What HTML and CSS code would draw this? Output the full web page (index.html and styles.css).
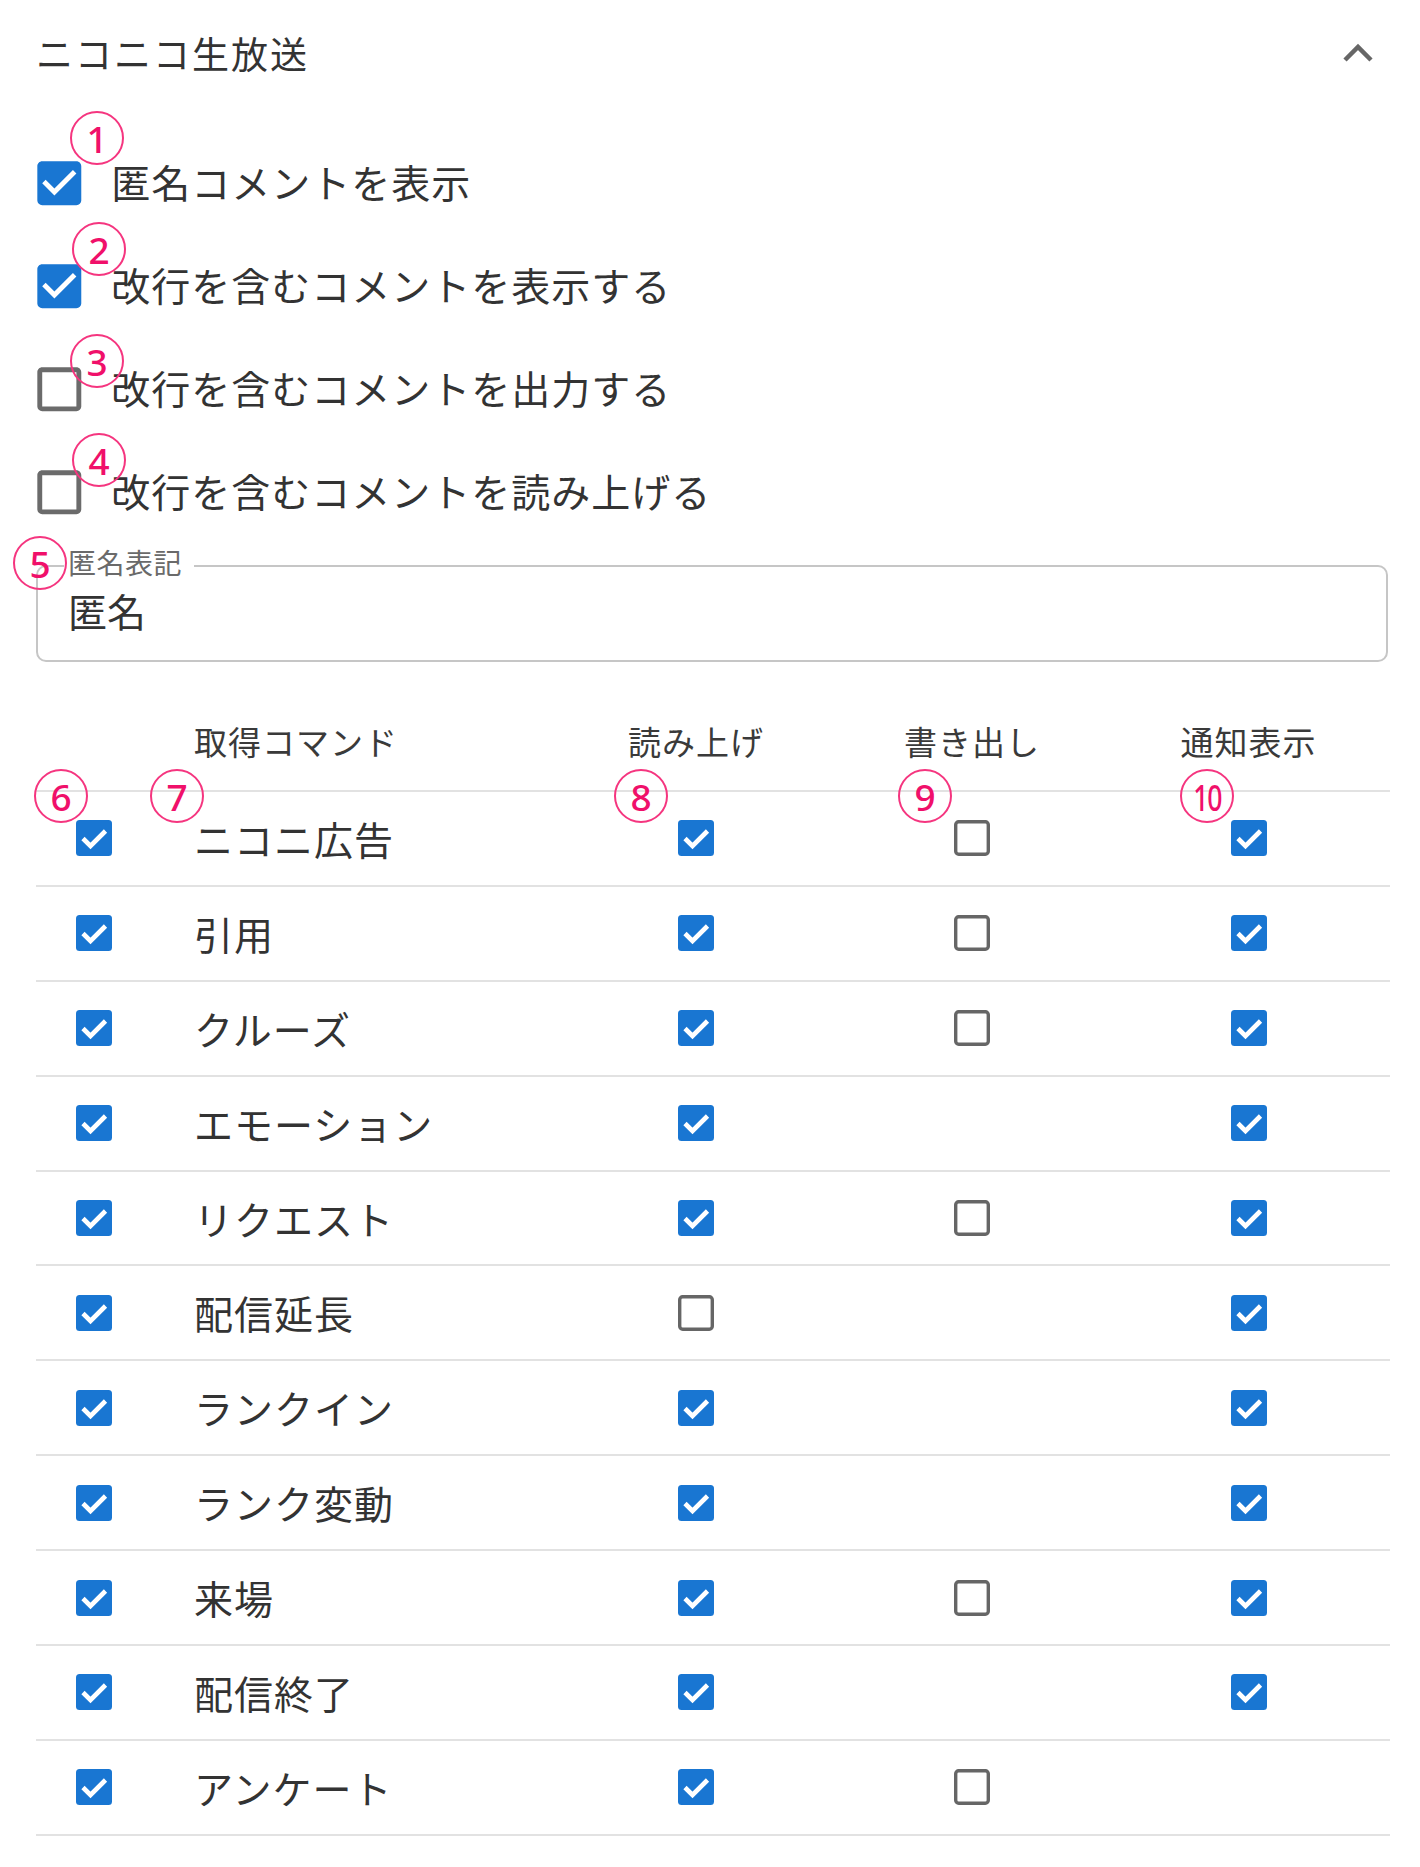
FILE: index.html
```html
<!DOCTYPE html>
<html lang="ja">
<head>
<meta charset="utf-8">
<title>ニコニコ生放送</title>
<link rel="stylesheet" href="styles.css">
</head>
<body>
<div class="panel">
  <div class="panel-header">
    <span class="panel-title">ニコニコ生放送</span>
    <svg class="chevron" viewBox="0 0 30 20" width="30" height="20"><polyline points="2,17 15,4 28,17" fill="none" stroke="#666" stroke-width="4.5"/></svg>
  </div>

  <div class="options">
    <div class="opt-row">
      <svg class="mcb on" viewBox="0 0 24 24"><path d="M10,17L5,12L6.41,10.58L10,14.17L17.59,6.58L19,8M19,3H5C3.89,3 3,3.89 3,5V19A2,2 0 0,0 5,21H19A2,2 0 0,0 21,19V5C21,3.89 20.1,3 19,3Z"/></svg>
      <span class="opt-label">匿名コメントを表示</span>
    </div>
    <div class="opt-row">
      <svg class="mcb on" viewBox="0 0 24 24"><path d="M10,17L5,12L6.41,10.58L10,14.17L17.59,6.58L19,8M19,3H5C3.89,3 3,3.89 3,5V19A2,2 0 0,0 5,21H19A2,2 0 0,0 21,19V5C21,3.89 20.1,3 19,3Z"/></svg>
      <span class="opt-label">改行を含むコメントを表示する</span>
    </div>
    <div class="opt-row">
      <svg class="mcb off" viewBox="0 0 24 24"><path d="M19,3H5C3.89,3 3,3.89 3,5V19A2,2 0 0,0 5,21H19A2,2 0 0,0 21,19V5C21,3.89 20.1,3 19,3M19,5V19H5V5H19Z"/></svg>
      <span class="opt-label">改行を含むコメントを出力する</span>
    </div>
    <div class="opt-row">
      <svg class="mcb off" viewBox="0 0 24 24"><path d="M19,3H5C3.89,3 3,3.89 3,5V19A2,2 0 0,0 5,21H19A2,2 0 0,0 21,19V5C21,3.89 20.1,3 19,3M19,5V19H5V5H19Z"/></svg>
      <span class="opt-label">改行を含むコメントを読み上げる</span>
    </div>
  </div>

  <fieldset class="field">
    <legend class="field-label">匿名表記</legend>
    <div class="field-value">匿名</div>
  </fieldset>

  <div class="table">
    <div class="trow thead">
      <div class="cell c1"></div>
      <div class="cell c2">取得コマンド</div>
      <div class="cell cc">読み上げ</div>
      <div class="cell cc">書き出し</div>
      <div class="cell cc">通知表示</div>
    </div>
    <div id="rows"></div>
  </div>

  <div class="mark" style="left:70px;top:111px">1</div>
  <div class="mark" style="left:72px;top:222px">2</div>
  <div class="mark" style="left:70px;top:334px">3</div>
  <div class="mark" style="left:72px;top:433px">4</div>
  <div class="mark" style="left:13px;top:536px">5</div>
  <div class="mark" style="left:34px;top:769px">6</div>
  <div class="mark" style="left:150px;top:769px">7</div>
  <div class="mark" style="left:614px;top:769px">8</div>
  <div class="mark" style="left:898px;top:769px">9</div>
  <div class="mark ten" style="left:1180px;top:769px"><span>10</span></div>
</div>
<script src="app.js"></script>
</body>
</html>
```

FILE: app.js
```js
var data = [
  ["ニコニ広告", 1, 0, 1],
  ["引用", 1, 0, 1],
  ["クルーズ", 1, 0, 1],
  ["エモーション", 1, -1, 1],
  ["リクエスト", 1, 0, 1],
  ["配信延長", 0, -1, 1],
  ["ランクイン", 1, -1, 1],
  ["ランク変動", 1, -1, 1],
  ["来場", 1, 0, 1],
  ["配信終了", 1, -1, 1],
  ["アンケート", 1, 0, -1]
];
function box(v) {
  if (v === 1) {
    return '<svg class="tcb" viewBox="0 0 36 36"><rect x="0" y="0" width="36" height="36" rx="3.5" fill="#1976d2"/><path d="M7 18.5 L14.5 26 L29.5 11" fill="none" stroke="#fff" stroke-width="4.6"/></svg>';
  }
  if (v === 0) {
    return '<svg class="tcb" viewBox="0 0 36 36"><rect x="1.7" y="1.7" width="32.6" height="32.6" rx="3" fill="#fff" stroke="#666" stroke-width="3.4"/></svg>';
  }
  return '';
}
var html = '';
data.forEach(function (r) {
  html += '<div class="trow">' +
    '<div class="cell c1 cc">' + box(1) + '</div>' +
    '<div class="cell c2 name">' + r[0] + '</div>' +
    '<div class="cell cc">' + box(r[1]) + '</div>' +
    '<div class="cell cc">' + box(r[2]) + '</div>' +
    '<div class="cell cc">' + box(r[3]) + '</div>' +
    '</div>';
});
document.getElementById('rows').innerHTML = html;
```

FILE: styles.css
```css
html, body {
  margin: 0;
  padding: 0;
  background: #fff;
}
body {
  font-family: "Noto Sans CJK JP", "Noto Sans", sans-serif;
  color: #333;
}
.panel {
  position: relative;
  margin-left: 36px;
  width: 1354px;
}
.panel-header {
  height: 106px;
  display: flex;
  align-items: center;
  justify-content: space-between;
}
.panel-title {
  font-size: 37px;
  line-height: 1;
  letter-spacing: 2px;
  color: #333;
}
.chevron {
  margin-right: 17px;
  display: block;
}
.options {
  padding-top: 26px;
}
.opt-row {
  height: 103px;
  display: flex;
  align-items: center;
}
.mcb {
  width: 58.6px;
  height: 58.6px;
  margin-left: -6.3px;
  flex: none;
  display: block;
}
.mcb.on { fill: #1976d2; }
.mcb.off { fill: #6b6b6b; }
.opt-label {
  margin-left: 23px;
  padding-bottom: 4px;
  font-size: 39px;
  line-height: 1;
  letter-spacing: 1px;
  color: #333;
}
.field {
  margin: 4px 0 0 0;
  width: 1352px;
  box-sizing: border-box;
  border: 2px solid #c6c6c6;
  border-radius: 10px;
  padding: 0 0 28px 26px;
}
.field-label {
  font-size: 28px;
  line-height: 28px;
  padding: 0 12px 8px 4px;
  color: #6a6a6a;
  letter-spacing: 0.5px;
}
.field-value {
  margin: 4px 0 0 4px;
  font-size: 39px;
  line-height: 44px;
  color: #333;
}
.table {
  margin-top: 35px;
}
.trow {
  display: grid;
  grid-template-columns: 116px 406px 276px 276px 277px;
  height: 92.9px;
  border-bottom: 2px solid #e2e2e2;
}
.thead {
  height: 93px;
}
.cell {
  display: flex;
  align-items: center;
}
.cc {
  justify-content: center;
}
.c2 {
  padding-left: 42px;
}
.thead .cell {
  font-size: 33px;
  line-height: 1;
  letter-spacing: 1px;
  color: #3a3a3a;
  padding-bottom: 4px;
}
.name {
  font-size: 39px;
  line-height: 1;
  letter-spacing: 1px;
  color: #333;
}
.tcb {
  width: 36px;
  height: 36px;
  display: block;
}
.mark {
  position: absolute;
  width: 50px;
  height: 50px;
  border: 2px solid #f5357f;
  border-radius: 50%;
  display: flex;
  align-items: center;
  justify-content: center;
  font-family: "Noto Sans", sans-serif;
  font-size: 37px;
  font-weight: 500;
  line-height: 1;
  color: #f0106a;
  margin-left: -36px;
}
.mark.ten span {
  display: inline-block;
  transform: scaleX(0.72);
  letter-spacing: -2px;
}
```
